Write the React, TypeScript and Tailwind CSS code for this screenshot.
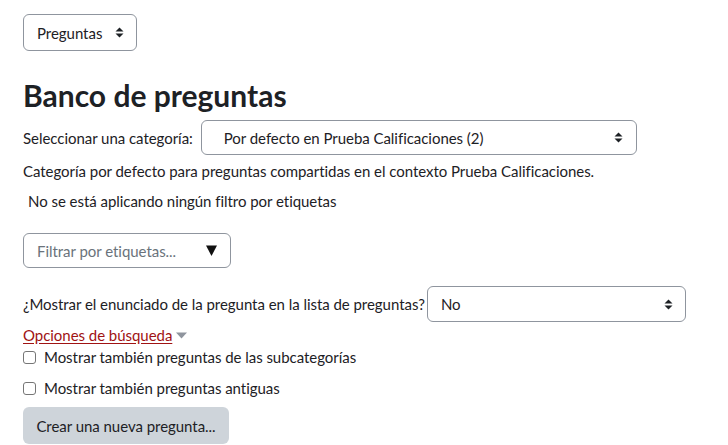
import React from "react";

function UpDown() {
  return (
    <svg width="9" height="11" viewBox="0 0 9 11" className="shrink-0">
      <path d="M4.5 0.5 L8.5 4.5 L0.5 4.5 Z" fill="#1d2125" />
      <path d="M4.5 10.5 L8.5 6.5 L0.5 6.5 Z" fill="#1d2125" />
    </svg>
  );
}

function FakeSelect({ label, className }: { label: string; className: string }) {
  return (
    <div
      className={`flex items-center justify-between border border-[#8f959e] rounded-[6px] bg-white pl-[13px] pr-[12px] text-[#1d2125] ${className}`}
    >
      <span>{label}</span>
      <UpDown />
    </div>
  );
}

function Check({ label }: { label: string }) {
  return (
    <label className="flex items-center gap-[8px] text-[#1d2125]">
      <span className="w-[13px] h-[13px] border border-[#767676] rounded-[3px] bg-white shrink-0" />
      <span>{label}</span>
    </label>
  );
}

export default function App() {
  return (
    <div
      className="min-h-screen bg-white px-[23px] pt-[14px] text-[15px] leading-[22px] tracking-[-0.04px] text-[#1d2125]"
      style={{ fontFamily: "Lato, 'Noto Sans', sans-serif" }}
    >
      <FakeSelect label="Preguntas" className="w-[114px] h-[37px] gap-[10px]" />

      <h2 className="mt-[26px] text-[30px] leading-[36px] font-bold tracking-normal text-[#1d2125]">Banco de preguntas</h2>

      <div className="mt-[7px] flex items-center gap-[8px]">
        <span>Seleccionar una categoría:</span>
        <FakeSelect label="Por defecto en Prueba Calificaciones (2)" className="w-[436px] h-[35px] pl-[22px] pr-[13px]" />
      </div>

      <p className="mt-[5px]">Categoría por defecto para preguntas compartidas en el contexto Prueba Calificaciones.</p>

      <p className="mt-[8px] pl-[5px]">No se está aplicando ningún filtro por etiquetas</p>

      <div className="mt-[21px] w-[208px] h-[35px] border border-[#8f959e] rounded-[6px] flex items-center justify-between pl-[13px] pr-[13px]">
        <span className="text-[#6a737b]">Filtrar por etiquetas...</span>
        <svg width="11" height="11" viewBox="0 0 11 11">
          <path d="M0 0.5 L11 0.5 L5.5 11 Z" fill="#111" />
        </svg>
      </div>

      <div className="mt-[18px] flex items-center gap-[2px]">
        <span>¿Mostrar el enunciado de la pregunta en la lista de preguntas?</span>
        <FakeSelect label="No" className="w-[259px] h-[36px] pl-[12px]" />
      </div>

      <div className="mt-[2px] flex items-center gap-[4px]">
        <a href="#" className="text-[#a01313] underline underline-offset-2">Opciones de búsqueda</a>
        <svg width="11" height="7" viewBox="0 0 11 7">
          <path d="M0 0.5 L11 0.5 L5.5 6.5 Z" fill="#8f959e" />
        </svg>
      </div>

      <div>
        <Check label="Mostrar también preguntas de las subcategorías" />
      </div>
      <div className="mt-[9px]">
        <Check label="Mostrar también preguntas antiguas" />
      </div>

      <button className="mt-[8px] w-[206px] h-[37px] rounded-[6px] bg-[#ced4da] text-[#1d2125]">
        Crear una nueva pregunta...
      </button>
    </div>
  );
}
